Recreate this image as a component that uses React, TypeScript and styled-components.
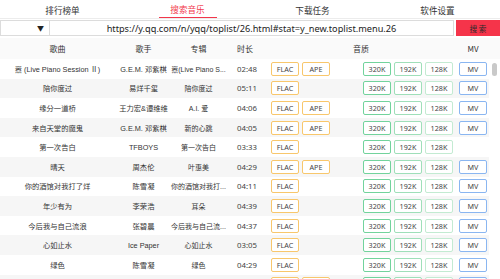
import styled, { createGlobalStyle } from "styled-components";

const GlobalStyle = createGlobalStyle`
  body {
    margin: 0;
    overflow: hidden;
    font-family: "Noto Sans CJK SC", "Noto Sans", sans-serif;
    color: #333;
    background: #fff;
  }
  * {
    box-sizing: border-box;
  }
`;

const COLS = "115px 57px 53px 40px 192px 32px 11px";

const Page = styled.div`
  width: 500px;
  height: 279px;
  display: flex;
  flex-direction: column;
  overflow: hidden;
`;

const TabBar = styled.div`
  display: grid;
  grid-template-columns: repeat(4, 1fr);
  height: 19px;
  border-bottom: 1px solid #ececec;
`;

const Tab = styled.div<{ $active?: boolean }>`
  display: flex;
  justify-content: center;
  align-items: center;
  font-size: 8.6px;
  color: ${(p) => (p.$active ? "#f2374b" : "#333")};
  span {
    display: flex;
    align-items: center;
    justify-content: center;
    height: 17px;
    margin-top: 1px;
    width: 58px;
    border-bottom: ${(p) => (p.$active ? "1.5px solid #f2374b" : "none")};
  }
`;

const SearchRow = styled.div`
  display: flex;
  height: 16px;
  margin-top: 1px;
`;

const SourceSelect = styled.div`
  width: 50px;
  display: flex;
  justify-content: flex-end;
  align-items: center;
  padding-right: 5px;
  border: 1px solid #dcdcdc;
  font-size: 7px;
  color: #222;
`;

const UrlInput = styled.input`
  flex: 1;
  min-width: 0;
  border: 1px solid #dcdcdc;
  border-left: none;
  outline: none;
  padding: 0 4px;
  text-align: center;
  font-family: "Noto Sans", sans-serif;
  font-size: 9.2px;
  color: #222;
`;

const SearchButton = styled.button`
  width: 44px;
  margin-left: 2px;
  border: none;
  background: #f5344a;
  color: #2a2a2a;
  font-family: "Noto Sans CJK SC", sans-serif;
  font-size: 7.6px;
  padding: 0;
`;

const HeaderRow = styled.div`
  display: grid;
  grid-template-columns: ${COLS};
  height: 21px;
  margin-top: 2px;
  align-items: center;
  background: #fafafa;
  font-size: 8px;
  color: #333;
`;

const HeadCell = styled.div`
  text-align: center;
`;

const ListArea = styled.div`
  flex: 1;
  display: flex;
  min-height: 0;
`;

const Rows = styled.div`
  flex: 1;
  overflow: hidden;
`;

const Row = styled.div<{ $alt: boolean }>`
  display: grid;
  grid-template-columns: 115px 57px 53px 40px 192px 32px;
  height: 19.6px;
  align-items: center;
  background: ${(p) => (p.$alt ? "#f6f6f6" : "#fff")};
  font-family: "Liberation Sans", "Noto Sans CJK SC", sans-serif;
  font-size: 7.3px;
  color: #333;
`;

const Cell = styled.div`
  display: flex;
  justify-content: center;
  white-space: nowrap;
`;

const AlbumCell = styled(Cell)`
  font-size: 7px;
`;

const TimeCell = styled(Cell)`
  font-family: "Noto Sans", sans-serif;
  font-size: 7.8px;
  color: #444;
  padding-left: 4px;
`;

const QualityCell = styled.div`
  display: flex;
  justify-content: space-between;
  padding: 0 4px 0 6px;
`;

const Group = styled.div`
  display: flex;
  gap: 3px;
`;

const Tag = styled.div<{ $color: string }>`
  width: 28px;
  height: 14px;
  display: flex;
  align-items: center;
  justify-content: center;
  border: 1.5px solid ${(p) => p.$color};
  border-radius: 2px;
  background: #fff;
  font-family: "Noto Sans", sans-serif;
  font-size: 7.2px;
  color: #444;
`;

const MvCell = styled.div`
  display: flex;
  justify-content: center;
`;

const ScrollTrack = styled.div`
  width: 11px;
  padding-top: 4px;
  display: flex;
  justify-content: center;
  background: #fff;
`;

const Thumb = styled.div`
  width: 5px;
  height: 13px;
  border-radius: 3px;
  background: #c9c9c9;
`;

const ORANGE = "#f8c76c";
const GREEN = ["#72d39c", "#9fdfb9", "#c3ebd2"];
const BLUE = "#8ab6f1";

interface Song {
  name: string;
  singer: string;
  album: string;
  time: string;
  ape: boolean;
  mv: boolean;
}

const songs: Song[] = [
  { name: "嚣 (Live Piano Session Ⅱ)", singer: "G.E.M. 邓紫棋", album: "嚣(Live Piano S...", time: "02:48", ape: true, mv: true },
  { name: "陪你度过", singer: "易烊千玺", album: "陪你度过", time: "05:11", ape: false, mv: true },
  { name: "缘分一道桥", singer: "王力宏&谭维维", album: "A.I. 爱", time: "04:06", ape: true, mv: true },
  { name: "来自天堂的魔鬼", singer: "G.E.M. 邓紫棋", album: "新的心跳", time: "04:05", ape: true, mv: true },
  { name: "第一次告白", singer: "TFBOYS", album: "第一次告白", time: "03:33", ape: false, mv: false },
  { name: "晴天", singer: "周杰伦", album: "叶惠美", time: "04:29", ape: true, mv: true },
  { name: "你的酒馆对我打了烊", singer: "陈雪凝", album: "你的酒馆对我打...", time: "04:11", ape: false, mv: true },
  { name: "年少有为", singer: "李荣浩", album: "耳朵", time: "04:39", ape: false, mv: true },
  { name: "今后我与自己流浪", singer: "张碧晨", album: "今后我与自己流...", time: "04:37", ape: false, mv: true },
  { name: "心如止水", singer: "Ice Paper", album: "心如止水", time: "03:05", ape: false, mv: true },
  { name: "绿色", singer: "陈雪凝", album: "绿色", time: "04:29", ape: false, mv: true },
  { name: "说好不哭", singer: "周杰伦", album: "说好不哭", time: "03:42", ape: true, mv: true },
];

function App() {
  return (
    <Page>
      <GlobalStyle />
      <TabBar>
        <Tab><span>排行榜单</span></Tab>
        <Tab $active><span>搜索音乐</span></Tab>
        <Tab><span>下载任务</span></Tab>
        <Tab><span>软件设置</span></Tab>
      </TabBar>
      <SearchRow>
        <SourceSelect>▼</SourceSelect>
        <UrlInput readOnly value="https://y.qq.com/n/yqq/toplist/26.html#stat=y_new.toplist.menu.26" />
        <SearchButton>搜 索</SearchButton>
      </SearchRow>
      <HeaderRow>
        <HeadCell>歌曲</HeadCell>
        <HeadCell>歌手</HeadCell>
        <HeadCell>专辑</HeadCell>
        <HeadCell>时长</HeadCell>
        <HeadCell>音质</HeadCell>
        <HeadCell>MV</HeadCell>
        <div />
      </HeaderRow>
      <ListArea>
        <Rows>
          {songs.map((s, i) => (
            <Row key={i} $alt={i % 2 === 1}>
              <Cell>{s.name}</Cell>
              <Cell>{s.singer}</Cell>
              <AlbumCell>{s.album}</AlbumCell>
              <TimeCell>{s.time}</TimeCell>
              <QualityCell>
                <Group>
                  <Tag $color={ORANGE}>FLAC</Tag>
                  {s.ape && <Tag $color={ORANGE}>APE</Tag>}
                </Group>
                <Group>
                  <Tag $color={GREEN[0]}>320K</Tag>
                  <Tag $color={GREEN[1]}>192K</Tag>
                  <Tag $color={GREEN[2]}>128K</Tag>
                </Group>
              </QualityCell>
              <MvCell>{s.mv && <Tag $color={BLUE}>MV</Tag>}</MvCell>
            </Row>
          ))}
        </Rows>
        <ScrollTrack>
          <Thumb />
        </ScrollTrack>
      </ListArea>
    </Page>
  );
}

export default App;
